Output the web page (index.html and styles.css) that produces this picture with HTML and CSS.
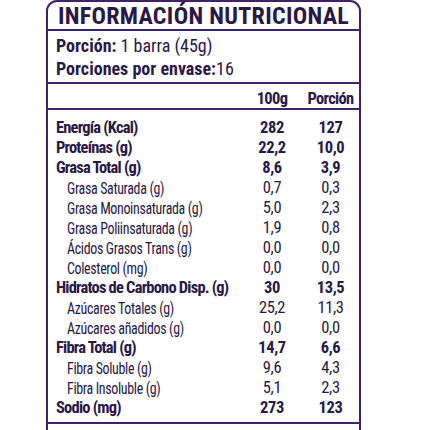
FILE: index.html
```html
<!DOCTYPE html>
<html lang="es">
<head>
    <meta charset="UTF-8">
    <meta name="viewport" content="width=device-width, initial-scale=1.0">
    <title>Información Nutricional</title>
    <link rel="stylesheet" href="styles.css">
</head>
<body>
    <div class="label">
        <h1 class="title">INFORMACIÓN NUTRICIONAL</h1>

        <div class="serving">
            <p><b>Porción:</b> 1 barra (45g)</p>
            <p><b>Porciones por envase:</b>16</p>
        </div>

        <div class="row head">
            <span></span>
            <span class="val">100g</span>
            <span class="val">Porción</span>
        </div>

        <div class="rows">
            <div class="row main"><span>Energía (Kcal)</span><span class="val">282</span><span class="val">127</span></div>
            <div class="row main"><span>Proteínas (g)</span><span class="val">22,2</span><span class="val">10,0</span></div>
            <div class="row main"><span>Grasa Total (g)</span><span class="val">8,6</span><span class="val">3,9</span></div>
            <div class="row sub"><span class="name">Grasa Saturada (g)</span><span class="val">0,7</span><span class="val">0,3</span></div>
            <div class="row sub"><span class="name">Grasa Monoinsaturada (g)</span><span class="val">5,0</span><span class="val">2,3</span></div>
            <div class="row sub"><span class="name">Grasa Poliinsaturada (g)</span><span class="val">1,9</span><span class="val">0,8</span></div>
            <div class="row sub"><span class="name">Ácidos Grasos Trans (g)</span><span class="val">0,0</span><span class="val">0,0</span></div>
            <div class="row sub"><span class="name">Colesterol (mg)</span><span class="val">0,0</span><span class="val">0,0</span></div>
            <div class="row main"><span>Hidratos de Carbono Disp. (g)</span><span class="val">30</span><span class="val">13,5</span></div>
            <div class="row sub"><span class="name">Azúcares Totales (g)</span><span class="val">25,2</span><span class="val">11,3</span></div>
            <div class="row sub"><span class="name">Azúcares añadidos (g)</span><span class="val">0,0</span><span class="val">0,0</span></div>
            <div class="row main"><span>Fibra Total (g)</span><span class="val">14,7</span><span class="val">6,6</span></div>
            <div class="row sub"><span class="name">Fibra Soluble (g)</span><span class="val">9,6</span><span class="val">4,3</span></div>
            <div class="row sub"><span class="name">Fibra Insoluble (g)</span><span class="val">5,1</span><span class="val">2,3</span></div>
            <div class="row main"><span>Sodio (mg)</span><span class="val">273</span><span class="val">123</span></div>
        </div>

        <div class="rows">
            <div class="row main"><span>Cenizas (g)</span><span class="val">11</span><span class="val">5</span></div>
        </div>
    </div>
</body>
</html>
```

FILE: styles.css
```css
body {
    margin: 0;
    background-color: #ffffff;
    font-family: "Roboto Condensed", "Roboto", sans-serif;
    font-stretch: condensed;
    color: #2a1846;
}

.label {
    margin-left: 46px;
    width: 311px;
    border: 2px solid #40206a;
    border-bottom: none;
    border-radius: 11px 11px 0 0;
    height: 440px;
    overflow: hidden;
}

.title {
    margin: 0;
    height: 27px;
    line-height: 28px;
    font-size: 24px;
    font-weight: bold;
    text-align: center;
    letter-spacing: 0.3px;
    border-bottom: 2px solid #40206a;
}

.serving {
    height: 53px;
    padding: 2px 8px 0;
    box-sizing: border-box;
    border-bottom: 2px solid #40206a;
}

.serving p {
    margin: 0;
    height: 23px;
    line-height: 25px;
    font-size: 18px;
}

.row {
    display: grid;
    grid-template-columns: minmax(0, 1fr) 60px 57px;
    padding-left: 8px;
    height: 20px;
    line-height: 20px;
    font-size: 16.5px;
    letter-spacing: -0.4px;
    white-space: nowrap;
}

.row .val {
    text-align: center;
}

.head {
    height: 24px;
    line-height: 29px;
    font-weight: bold;
    letter-spacing: -0.7px;
    border-bottom: 2px solid #40206a;
}

.rows {
    padding: 8px 0 4px;
    border-bottom: 2px solid #40206a;
}

.main {
    font-weight: bold;
}

.main span:first-child {
    letter-spacing: -0.8px;
}

/* sub-items are set in a narrower cut on the printed label */
.sub .name {
    display: inline-block;
    margin-left: 11px;
    font-size: 17px;
    transform: scaleX(0.82);
    transform-origin: left center;
}
```
